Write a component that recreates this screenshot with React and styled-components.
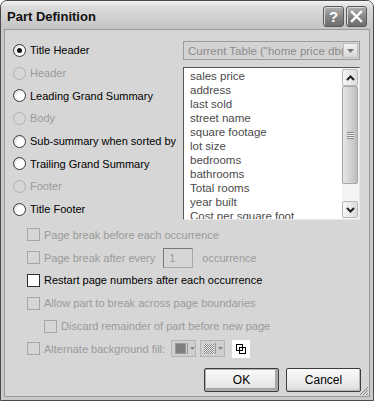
import React from "react";
import styled, { createGlobalStyle } from "styled-components";

const GlobalStyle = createGlobalStyle`
  html, body { margin: 0; padding: 0; background: #fff; }
  body { font-family: "Liberation Sans", Arial, sans-serif; font-size: 11px; }
`;

const parts = [
  { label: "Title Header", checked: true },
  { label: "Header", disabled: true },
  { label: "Leading Grand Summary" },
  { label: "Body", disabled: true },
  { label: "Sub-summary when sorted by" },
  { label: "Trailing Grand Summary" },
  { label: "Footer", disabled: true },
  { label: "Title Footer" },
];

const fields = [
  "sales price",
  "address",
  "last sold",
  "street name",
  "square footage",
  "lot size",
  "bedrooms",
  "bathrooms",
  "Total rooms",
  "year built",
  "Cost per square foot",
];

const App = () => {
  return (
    <>
      <GlobalStyle />
      <Window>
        <TitleBar>
          <Title>Part Definition</Title>
          <TitleButtons>
            <CaptionButton>?</CaptionButton>
            <CaptionButton>
              <svg width="13" height="13" viewBox="0 0 13 13">
                <path d="M2 2 L11 11 M11 2 L2 11" stroke="#fff" strokeWidth="2.4" strokeLinecap="square" />
              </svg>
            </CaptionButton>
          </TitleButtons>
        </TitleBar>
        <Body>
          <TopSection>
            <RadioColumn>
              {parts.map((p) => (
                <RadioRow key={p.label} $disabled={p.disabled}>
                  <Radio $checked={p.checked} $disabled={p.disabled} />
                  {p.label}
                </RadioRow>
              ))}
            </RadioColumn>
            <TableColumn>
              <Select>
                <SelectText>Current Table ("home price db(N</SelectText>
                <SelectArrow>
                  <svg width="7" height="4" viewBox="0 0 7 4">
                    <path d="M0 0 H7 L3.5 4 Z" fill="#777" />
                  </svg>
                </SelectArrow>
              </Select>
              <ListBox>
                <ListItems>
                  {fields.map((f) => (
                    <ListItem key={f}>{f}</ListItem>
                  ))}
                </ListItems>
                <ScrollBar>
                  <ScrollButton>
                    <svg width="9" height="6" viewBox="0 0 9 6">
                      <path d="M1 5 L4.5 1.5 L8 5" stroke="#222" strokeWidth="2" fill="none" />
                    </svg>
                  </ScrollButton>
                  <Thumb>
                    <Grip />
                  </Thumb>
                  <Track />
                  <ScrollButton>
                    <svg width="9" height="6" viewBox="0 0 9 6">
                      <path d="M1 1 L4.5 4.5 L8 1" stroke="#222" strokeWidth="2" fill="none" />
                    </svg>
                  </ScrollButton>
                </ScrollBar>
              </ListBox>
            </TableColumn>
          </TopSection>

          <Options>
            <CheckRow $disabled>
              <Check $disabled />
              Page break before each occurrence
            </CheckRow>
            <CheckRow $disabled>
              <Check $disabled />
              Page break after every
              <CountField>1</CountField>
              occurrence
            </CheckRow>
            <CheckRow>
              <Check />
              Restart page numbers after each occurrence
            </CheckRow>
            <CheckRow $disabled>
              <Check $disabled />
              Allow part to break across page boundaries
            </CheckRow>
            <CheckRow $disabled $indent>
              <Check $disabled />
              Discard remainder of part before new page
            </CheckRow>
            <CheckRow $disabled>
              <Check $disabled />
              Alternate background fill:
              <FillTools>
                <FillButton>
                  <Swatch />
                  <Divider />
                  <svg width="5" height="3" viewBox="0 0 5 3">
                    <path d="M0 0 H5 L2.5 3 Z" fill="#888" />
                  </svg>
                </FillButton>
                <FillButton>
                  <Pattern />
                  <Divider />
                  <svg width="5" height="3" viewBox="0 0 5 3">
                    <path d="M0 0 H5 L2.5 3 Z" fill="#888" />
                  </svg>
                </FillButton>
                <LayerBox>
                  <svg width="12" height="12" viewBox="0 0 12 12">
                    <rect x="1.5" y="1.5" width="6" height="6" fill="none" stroke="#000" />
                    <rect x="4.5" y="4.5" width="6" height="6" fill="none" stroke="#000" />
                  </svg>
                </LayerBox>
              </FillTools>
            </CheckRow>
          </Options>

          <Buttons>
            <Button $default>OK</Button>
            <Button>Cancel</Button>
          </Buttons>
          <Grabber>
            <svg width="11" height="11" viewBox="0 0 11 11">
              <path d="M10 2 L2 10 M10 5 L5 10 M10 8 L8 10" stroke="#888" strokeWidth="1" />
            </svg>
          </Grabber>
        </Body>
      </Window>
    </>
  );
};

const Window = styled.div`
  width: 374px;
  height: 401px;
  box-sizing: border-box;
  background: #c9c9c9;
  border: 1px solid #4a4a4a;
  border-radius: 7px 7px 0 0;
  display: flex;
  flex-direction: column;
  overflow: hidden;
`;

const TitleBar = styled.div`
  height: 28px;
  flex: none;
  display: flex;
  align-items: center;
  justify-content: space-between;
  padding: 0 6px 0 6px;
  background: linear-gradient(#f4f4f4 0%, #dcdcdc 20%, #cdcdcd 70%, #c4c4c4 100%);
`;

const Title = styled.div`
  font-weight: bold;
  font-size: 13px;
  color: #111;
  padding-top: 2px;
`;

const TitleButtons = styled.div`
  display: flex;
  gap: 2px;
  padding-top: 2px;
`;

const CaptionButton = styled.div`
  width: 19px;
  height: 19px;
  border: 1px solid #5a5a5a;
  border-radius: 3px;
  background: linear-gradient(#b0b0b0, #808080 60%, #6e6e6e);
  color: #fff;
  font-weight: bold;
  font-size: 15px;
  display: flex;
  align-items: center;
  justify-content: center;
  box-shadow: inset 1px 1px 0 #d8d8d8;
`;

const Body = styled.div`
  position: relative;
  flex: 1;
  margin: 0 3px 3px 3px;
  background: #d6d6d6;
  border: 1px solid #9a9a9a;
  padding: 9px 8px 0 8px;
  display: flex;
  flex-direction: column;
`;

const TopSection = styled.div`
  display: flex;
  justify-content: space-between;
`;

const RadioColumn = styled.div`
  display: flex;
  flex-direction: column;
`;

const RadioRow = styled.div`
  height: 22.7px;
  display: flex;
  align-items: center;
  gap: 4px;
  white-space: nowrap;
  color: ${(p) => (p.$disabled ? "#9a9a9a" : "#000")};
`;

const Radio = styled.span`
  width: 11px;
  height: 11px;
  flex: none;
  border-radius: 50%;
  border: 1px solid ${(p) => (p.$disabled ? "#b0b0b0" : "#3a3a3a")};
  background: ${(p) =>
    p.$disabled ? "#d6d6d6" : "radial-gradient(circle at 65% 65%, #ffffff 40%, #c8c8c8 100%)"};
  display: flex;
  align-items: center;
  justify-content: center;
  &::after {
    content: "";
    width: 5px;
    height: 5px;
    border-radius: 50%;
    background: ${(p) => (p.$checked ? "#111" : "transparent")};
  }
`;

const TableColumn = styled.div`
  width: 177px;
  display: flex;
  flex-direction: column;
  gap: 7px;
  padding-top: 2px;
  margin-right: 1px;
`;

const Select = styled.div`
  height: 19px;
  box-sizing: border-box;
  border: 1px solid #9c9c9c;
  background: #d3d3d3;
  display: flex;
  align-items: center;
  justify-content: space-between;
  padding: 1px;
`;

const SelectText = styled.span`
  color: #8c8c8c;
  font-size: 11.5px;
  padding-left: 3px;
  white-space: nowrap;
  overflow: hidden;
`;

const SelectArrow = styled.span`
  width: 15px;
  height: 15px;
  flex: none;
  box-sizing: border-box;
  border: 1px solid #bdbdbd;
  background: linear-gradient(#f2f2f2, #d8d8d8);
  display: flex;
  align-items: center;
  justify-content: center;
`;

const ListBox = styled.div`
  height: 153px;
  box-sizing: border-box;
  border: 1px solid #555;
  border-right-color: #e8e8e8;
  border-bottom-color: #e8e8e8;
  background: #fff;
  display: flex;
  overflow: hidden;
`;

const ListItems = styled.div`
  flex: 1;
  padding: 1px 0 0 6px;
  overflow: hidden;
`;

const ListItem = styled.div`
  height: 14px;
  line-height: 14px;
  font-size: 11.5px;
  color: #4a4a4a;
  white-space: nowrap;
`;

const ScrollBar = styled.div`
  width: 17px;
  flex: none;
  display: flex;
  flex-direction: column;
  background: #f4f4f4;
  padding: 1px 1px 1px 0;
  box-sizing: border-box;
`;

const ScrollButton = styled.div`
  height: 15px;
  flex: none;
  border: 1px solid #b8b8b8;
  border-radius: 2px;
  background: linear-gradient(90deg, #f6f6f6, #dcdcdc);
  display: flex;
  align-items: center;
  justify-content: center;
`;

const Thumb = styled.div`
  height: 96px;
  flex: none;
  border: 1px solid #a8a8a8;
  border-radius: 2px;
  background: linear-gradient(90deg, #e6e6e6, #cfcfcf 60%, #bdbdbd);
  display: flex;
  align-items: center;
  justify-content: center;
`;

const Grip = styled.div`
  width: 7px;
  height: 7px;
  background: repeating-linear-gradient(#888 0 1px, #f0f0f0 1px 2px);
`;

const Track = styled.div`
  flex: 1;
`;

const Options = styled.div`
  display: flex;
  flex-direction: column;
  padding-top: 3px;
  padding-left: 14px;
`;

const CheckRow = styled.div`
  height: 22.8px;
  display: flex;
  align-items: center;
  gap: 4px;
  padding-left: ${(p) => (p.$indent ? "17px" : "0")};
  color: ${(p) => (p.$disabled ? "#9a9a9a" : "#000")};
  white-space: nowrap;
`;

const Check = styled.span`
  width: 11px;
  height: 11px;
  flex: none;
  border: 1px solid ${(p) => (p.$disabled ? "#a6a6a6" : "#2e2e2e")};
  background: ${(p) => (p.$disabled ? "#d6d6d6" : "#fff")};
`;

const CountField = styled.span`
  width: 30px;
  height: 20px;
  box-sizing: border-box;
  border: 1px solid #a8a8a8;
  border-left-color: #777;
  border-top-color: #777;
  padding: 3px 0 0 5px;
  margin: 0 5px 0 4px;
  color: #9a9a9a;
`;

const FillTools = styled.div`
  display: flex;
  align-items: center;
  gap: 4px;
  margin-left: 2px;
`;

const FillButton = styled.div`
  width: 25px;
  height: 17px;
  box-sizing: border-box;
  border: 1px solid #b4b4b4;
  background: #cfcfcf;
  display: flex;
  align-items: center;
  gap: 1px;
  padding-left: 3px;
`;

const Swatch = styled.span`
  width: 9px;
  height: 9px;
  background: #7e7e7e;
  border: 1px solid #999;
`;

const Pattern = styled.span`
  width: 10px;
  height: 10px;
  background-image: repeating-conic-gradient(#8a8a8a 0 25%, #e8e8e8 0 50%);
  background-size: 2px 2px;
`;

const Divider = styled.span`
  width: 1px;
  height: 11px;
  background: #999;
  margin-right: 1px;
`;

const LayerBox = styled.div`
  width: 18px;
  height: 18px;
  background: #fff;
  display: flex;
  align-items: center;
  justify-content: center;
  margin-left: 3px;
`;

const Buttons = styled.div`
  display: flex;
  justify-content: flex-end;
  gap: 7px;
  margin-top: 8px;
  padding-right: 0;
`;

const Button = styled.div`
  width: 75px;
  height: 24px;
  box-sizing: border-box;
  border: 1px solid #3c3c3c;
  border-radius: 2px;
  background: linear-gradient(#fafafa, #e6e6e6 80%, #d2d2d2);
  box-shadow: ${(p) => (p.$default ? "inset 0 0 0 1px #b0b0b0, inset -1px -1px 0 2px #a6a6a6" : "inset -1px -1px 0 #b8b8b8")};
  display: flex;
  align-items: center;
  justify-content: center;
  font-size: 12px;
  color: #000;
`;

const Grabber = styled.div`
  position: absolute;
  right: 0;
  bottom: 0;
  width: 11px;
  height: 11px;
`;

export default App;
